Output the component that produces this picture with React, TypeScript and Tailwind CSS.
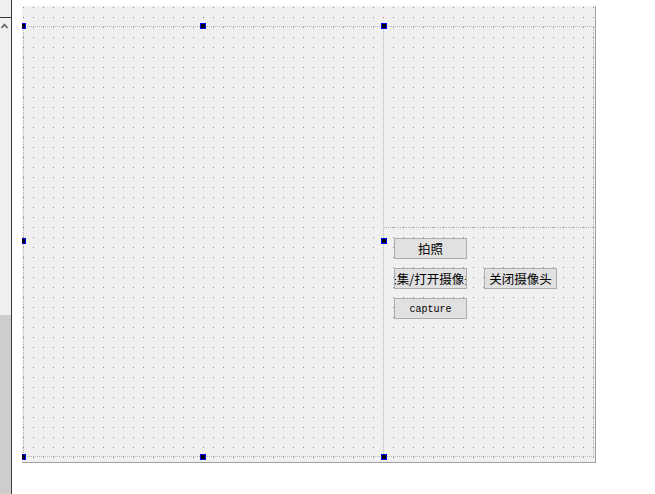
import React from "react";

// Qt Designer 风格的表单画布：左侧滚动条 + 点阵网格 + 布局虚线 + 选中手柄
const HANDLES: { x: number; y: number }[] = [
  { x: -2, y: 17 },
  { x: 178, y: 17 },
  { x: 359, y: 17 },
  { x: -2, y: 232 },
  { x: 359, y: 232 },
  { x: -2, y: 448 },
  { x: 178, y: 448 },
  { x: 359, y: 448 },
];

function QtButton({ children, mono }: { children: React.ReactNode; mono?: boolean }) {
  return (
    <div
      className={`flex h-[21px] w-[73px] items-center justify-center overflow-hidden whitespace-nowrap border border-[#adadad] bg-[#e1e1e1] leading-none text-black ${
        mono
          ? "pt-[3px] font-['Liberation_Mono',monospace] text-[10px] font-medium"
          : "pt-[2px] font-['Noto_Sans_CJK_SC','Noto_Sans',sans-serif] text-[12.5px]"
      }`}
    >
      {children}
    </div>
  );
}

export default function App() {
  return (
    <div className="flex h-[494px] w-[655px] overflow-hidden bg-white">
      {/* left scrollbar strip */}
      <div className="flex h-full w-[12px] flex-col border-r border-[#3a3a3a] bg-[#f0f0f0]">
        <div className="h-[18px] border-b border-[#3a3a3a]" />
        <div className="flex h-[297px] items-start pl-[1px] pt-[5px]">
          <svg width="8" height="6" viewBox="0 0 8 6">
            <polyline points="0.5,5 3.5,1.5 6.5,5" fill="none" stroke="#606060" strokeWidth="1.6" />
          </svg>
        </div>
        <div className="flex-1 bg-[#cdcdcd]" />
      </div>

      {/* form canvas */}
      <div className="relative ml-[10px] mt-[6px] h-[457px] w-[574px] overflow-hidden border-b border-r border-[#a0a0a0] bg-[#f0f0f0] bg-[linear-gradient(to_bottom,transparent_1px,#f0f0f0_1px),linear-gradient(to_right,#8c8c8c_1px,transparent_1px)] bg-[size:10px_10px] bg-[position:1px_1px]">
        <div className="ml-[1px] mt-[20px] grid h-[431px] w-[571px] grid-cols-[360px_1fr] border border-dotted border-[#b8b8b8]">
          <div className="border-r border-dotted border-[#b8b8b8]" />
          <div className="flex flex-col">
            <div className="h-[201px] border-b border-dotted border-[#b8b8b8]" />
            <div className="grid grid-cols-[73px_73px] gap-x-[17px] gap-y-[9px] pl-[10px] pt-[10px]">
              <QtButton>拍照</QtButton>
              <div />
              <QtButton>采集/打开摄像头</QtButton>
              <QtButton>关闭摄像头</QtButton>
              <QtButton mono>capture</QtButton>
            </div>
          </div>
        </div>

        {HANDLES.map((h, i) => (
          <div
            key={i}
            className="absolute h-[6px] w-[6px] border border-[#0000ff] bg-black"
            style={{ left: h.x, top: h.y }}
          />
        ))}
      </div>
    </div>
  );
}
